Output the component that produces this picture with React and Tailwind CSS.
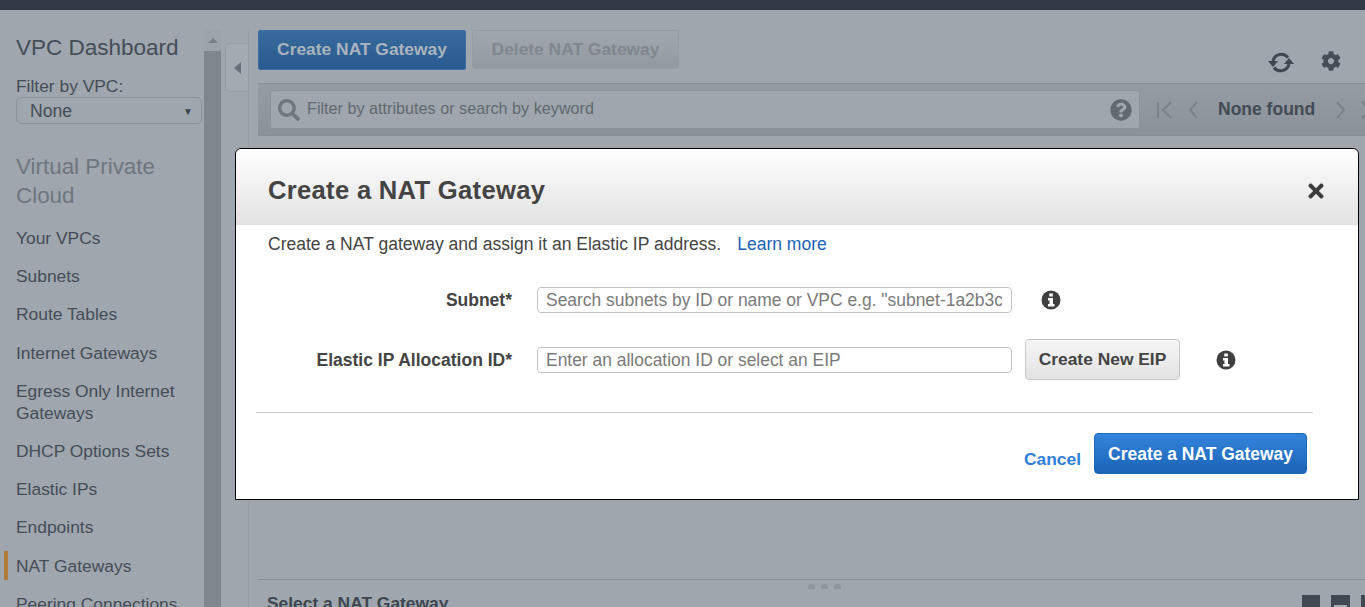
import React from 'react';
import { FaCog, FaQuestionCircle, FaSearch, FaTimes } from 'react-icons/fa';

const navItems = [
    'Your VPCs',
    'Subnets',
    'Route Tables',
    'Internet Gateways',
    'Egress Only Internet Gateways',
    'DHCP Options Sets',
    'Elastic IPs',
    'Endpoints',
    'NAT Gateways',
    'Peering Connections',
];

const Chevron = ({ flip, bar }) => (
    <svg width={bar ? 15 : 10} height="18" viewBox={bar ? '0 0 15 18' : '0 0 10 18'} className={flip ? 'shrink-0 scale-x-[-1]' : 'shrink-0'} fill="none" stroke="currentColor" strokeWidth="2">
        {bar ? <path d="M1 1v16M14 1L6 9l8 8" /> : <path d="M9 1L2 9l7 8" />}
    </svg>
);

const RefreshIcon = () => (
    <svg width="26" height="21" viewBox="0 0 26 21" fill="none" className="shrink-0 text-[#3f4750]">
        <path d="M5 9A8.5 8.5 0 0 1 20 5.5" stroke="currentColor" strokeWidth="3" />
        <path d="M21 12A8.5 8.5 0 0 1 6 15.5" stroke="currentColor" strokeWidth="3" />
        <path d="M0 9h10l-5 6z" fill="currentColor" />
        <path d="M16 12h10l-5-6z" fill="currentColor" />
    </svg>
);

const InfoIcon = ({ className }) => (
    <svg width="20" height="20" viewBox="0 0 20 20" className={className}>
        <circle cx="10" cy="10" r="9.5" fill="#3f3f3f" />
        <path d="M8.3 3.5h3.5v3H8.3zM7 8h5v6h1.5v2.5H7V14h1.5v-3.5H7z" fill="#fff" />
    </svg>
);

const Sidebar = () => (
    <div className="w-[204px] shrink-0 pl-[16px] pr-[2px] pt-[23px] text-[#454d57]">
        <div className="text-[22.5px] leading-[30px]">VPC Dashboard</div>
        <div className="mt-[13px] text-[17.4px] leading-[20px]">Filter by VPC:</div>
        <div className="mt-[1px] flex h-[27px] items-center justify-between rounded-[5px] border border-[#8b929a] pl-[13px] pr-[8px] pt-[1px] text-[17.6px]">
            <span>None</span>
            <span className="text-[10px] text-[#3d444d]">▼</span>
        </div>
        <div className="mt-[28px] text-[22.4px] leading-[29px] text-[#6f767e]">Virtual Private Cloud</div>
        <ul className="mt-[9px] text-[17.4px] leading-[22px]">
            {navItems.map(item => (
                <li key={item} className="relative py-[8.1px]">
                    {item === 'NAT Gateways' && (
                        <span className="absolute left-[-12px] top-[4px] h-[29px] w-[4px] bg-[#b07c38]" />
                    )}
                    {item}
                </li>
            ))}
        </ul>
    </div>
);

const Scrollbar = () => (
    <div className="w-[17px] shrink-0 bg-[#7f868d]">
        <div className="flex h-[21px] items-center justify-center bg-[#9ca3aa]">
            <span className="h-0 w-0 border-x-[5px] border-b-[5px] border-x-transparent border-b-[#7a8188]" />
        </div>
    </div>
);

const Toolbar = () => (
    <div className="flex h-[53px] items-start justify-between">
        <div className="flex gap-[6px]">
            <button className="h-[40px] w-[208px] rounded-[2px] border border-[#3f6ca6] bg-gradient-to-b from-[#376a9d] to-[#2a5a8f] pb-[2px] text-[17.4px] font-bold text-[#a9b3bd]">
                Create NAT Gateway
            </button>
            <button className="h-[39px] w-[207px] rounded-[3px] border border-[#959ca3] bg-gradient-to-b from-[#a0a7ae] to-[#92999f] pb-[1px] text-[17.4px] font-bold text-[#80878e]">
                Delete NAT Gateway
            </button>
        </div>
        <div className="mr-[24px] mt-[21px] flex items-center gap-[27px]">
            <RefreshIcon />
            <FaCog className="mb-[3px] h-[20px] w-[20px] text-[#454d56]" />
        </div>
    </div>
);

const FilterBar = () => (
    <div className="flex h-[53px] items-center overflow-hidden border-y border-[#888f96] bg-gradient-to-b from-[#949ba2] to-[#8b9299] pl-[12px]">
        <div className="flex h-[39px] w-[870px] shrink-0 items-center rounded-[3px] border border-[#8b9299] bg-[#9fa6ad] pl-[7px] pr-[7px] text-[16.2px] text-[#62696f]">
            <FaSearch className="mr-[7px] h-[22px] w-[22px] text-[#70777e]" />
            <span className="flex-1 pb-[2px]">Filter by attributes or search by keyword</span>
            <FaQuestionCircle className="h-[22px] w-[22px] text-[#62696f]" />
        </div>
        <div className="ml-[17px] flex items-center text-[#7b8289]">
            <Chevron bar />
            <span className="ml-[16px]"><Chevron /></span>
            <span className="ml-[20px] whitespace-nowrap text-[17.5px] font-bold text-[#434b54]">None found</span>
            <span className="ml-[21px]"><Chevron flip /></span>
            <span className="ml-[15px]"><Chevron flip bar /></span>
        </div>
    </div>
);

const BottomPane = () => (
    <div className="relative mt-auto h-[28px] border-t border-[#878e95]">
        <div className="absolute left-[550px] top-[4px] flex gap-[6px]">
            <span className="h-[5px] w-[7px] rounded-t-[3px] bg-[#8e959c]" />
            <span className="h-[5px] w-[7px] rounded-t-[3px] bg-[#8e959c]" />
            <span className="h-[5px] w-[7px] rounded-t-[3px] bg-[#8e959c]" />
        </div>
        <div className="whitespace-nowrap pl-[9px] pt-[13px] text-[17.4px] font-bold leading-[20px] text-[#3e4650]">Select a NAT Gateway</div>
        <div className="absolute left-[1044px] top-[15px] flex gap-[11px]">
            <span className="h-[13px] w-[18px] bg-[#404851]" />
            <span className="relative h-[13px] w-[19px] bg-[#404851]">
                <span className="absolute bottom-0 left-[3px] h-[3px] w-[13px] bg-[#a8adb3]" />
            </span>
            <span className="relative h-[13px] w-[19px] bg-[#404851]" />
        </div>
    </div>
);

const Modal = () => (
    <div className="absolute left-[235px] top-[148px] flex h-[352px] w-[1124px] flex-col rounded-t-[6px] border border-black bg-white text-[#444444]">
        <div className="flex h-[76px] shrink-0 items-center justify-between rounded-t-[6px] bg-gradient-to-b from-white to-[#e2e2e2] pl-[32px] pr-[33px] pt-[6px]">
            <h2 className="text-[25.6px] font-bold tracking-[0.3px]">Create a NAT Gateway</h2>
            <FaTimes className="mt-[2px] h-[22px] w-[18px] text-[#3d3d3d]" />
        </div>
        <div className="pl-[32px] pt-[8px] text-[17.55px] leading-[22px]">
            Create a NAT gateway and assign it an Elastic IP address.
            <a className="ml-[16px] text-[#1a62b8]">Learn more</a>
        </div>
        <div className="mt-[32px] flex items-center">
            <label className="w-[276px] text-right text-[17.5px] font-bold">Subnet*</label>
            <div className="ml-[25px] flex h-[26px] w-[475px] items-center rounded-[4px] border border-[#c4c4c4] px-[8px] text-[17.45px] text-[#7a7a7a]">
                <span className="w-[456px] overflow-hidden whitespace-nowrap">Search subnets by ID or name or VPC e.g. "subnet-1a2b3c</span>
            </div>
            <InfoIcon className="ml-[29px]" />
        </div>
        <div className="mt-[26px] flex items-center">
            <label className="w-[276px] text-right text-[17.5px] font-bold">Elastic IP Allocation ID*</label>
            <div className="ml-[25px] flex h-[26px] w-[475px] items-center rounded-[4px] border border-[#c4c4c4] pl-[8px] text-[17.45px] text-[#7a7a7a]">
                Enter an allocation ID or select an EIP
            </div>
            <button className="ml-[13px] h-[41px] w-[155px] rounded-[4px] border border-[#c8c8c8] bg-gradient-to-b from-[#f6f6f6] to-[#e2e2e2] pb-[1px] text-[17.4px] font-bold text-[#444444]">
                Create New EIP
            </button>
            <InfoIcon className="ml-[36px]" />
        </div>
        <div className="ml-[20px] mr-[45px] mt-[32px] border-t border-[#cccccc]" />
        <div className="mt-[20px] flex items-center justify-end pr-[51px]">
            <a className="mr-[13px] mt-[10px] text-[17.4px] font-bold text-[#2f80dc]">Cancel</a>
            <button className="h-[41px] w-[213px] rounded-[4px] border border-[#1f68b4] bg-gradient-to-b from-[#3484dc] to-[#1a64b6] text-[17.45px] font-bold text-white">
                Create a NAT Gateway
            </button>
        </div>
    </div>
);

export default function App() {
    return (
        <div className="relative flex h-[607px] w-[1365px] flex-col overflow-hidden bg-[#9fa6ad] font-['Liberation_Sans',Arial,sans-serif]">
            <div className="h-[10px] shrink-0 bg-[#323a45]" />
            <div className="flex min-h-0 flex-1">
                <Sidebar />
                <div className="flex h-full pt-[20px]"><Scrollbar /></div>
                <div className="ml-[4px] mt-[33px] flex h-[49px] w-[23px] shrink-0 items-center justify-center rounded-l-[5px] border-y border-l border-[#969da4] bg-[#a3aab1]">
                    <span className="h-0 w-0 border-y-[6px] border-r-[7px] border-y-transparent border-r-[#69707a]" />
                </div>
                <div className="mt-[20px] flex min-w-0 flex-1 flex-col border-l border-[#979ea5] pl-[9px]">
                    <Toolbar />
                    <FilterBar />
                    <BottomPane />
                </div>
            </div>
            <Modal />
        </div>
    );
}
